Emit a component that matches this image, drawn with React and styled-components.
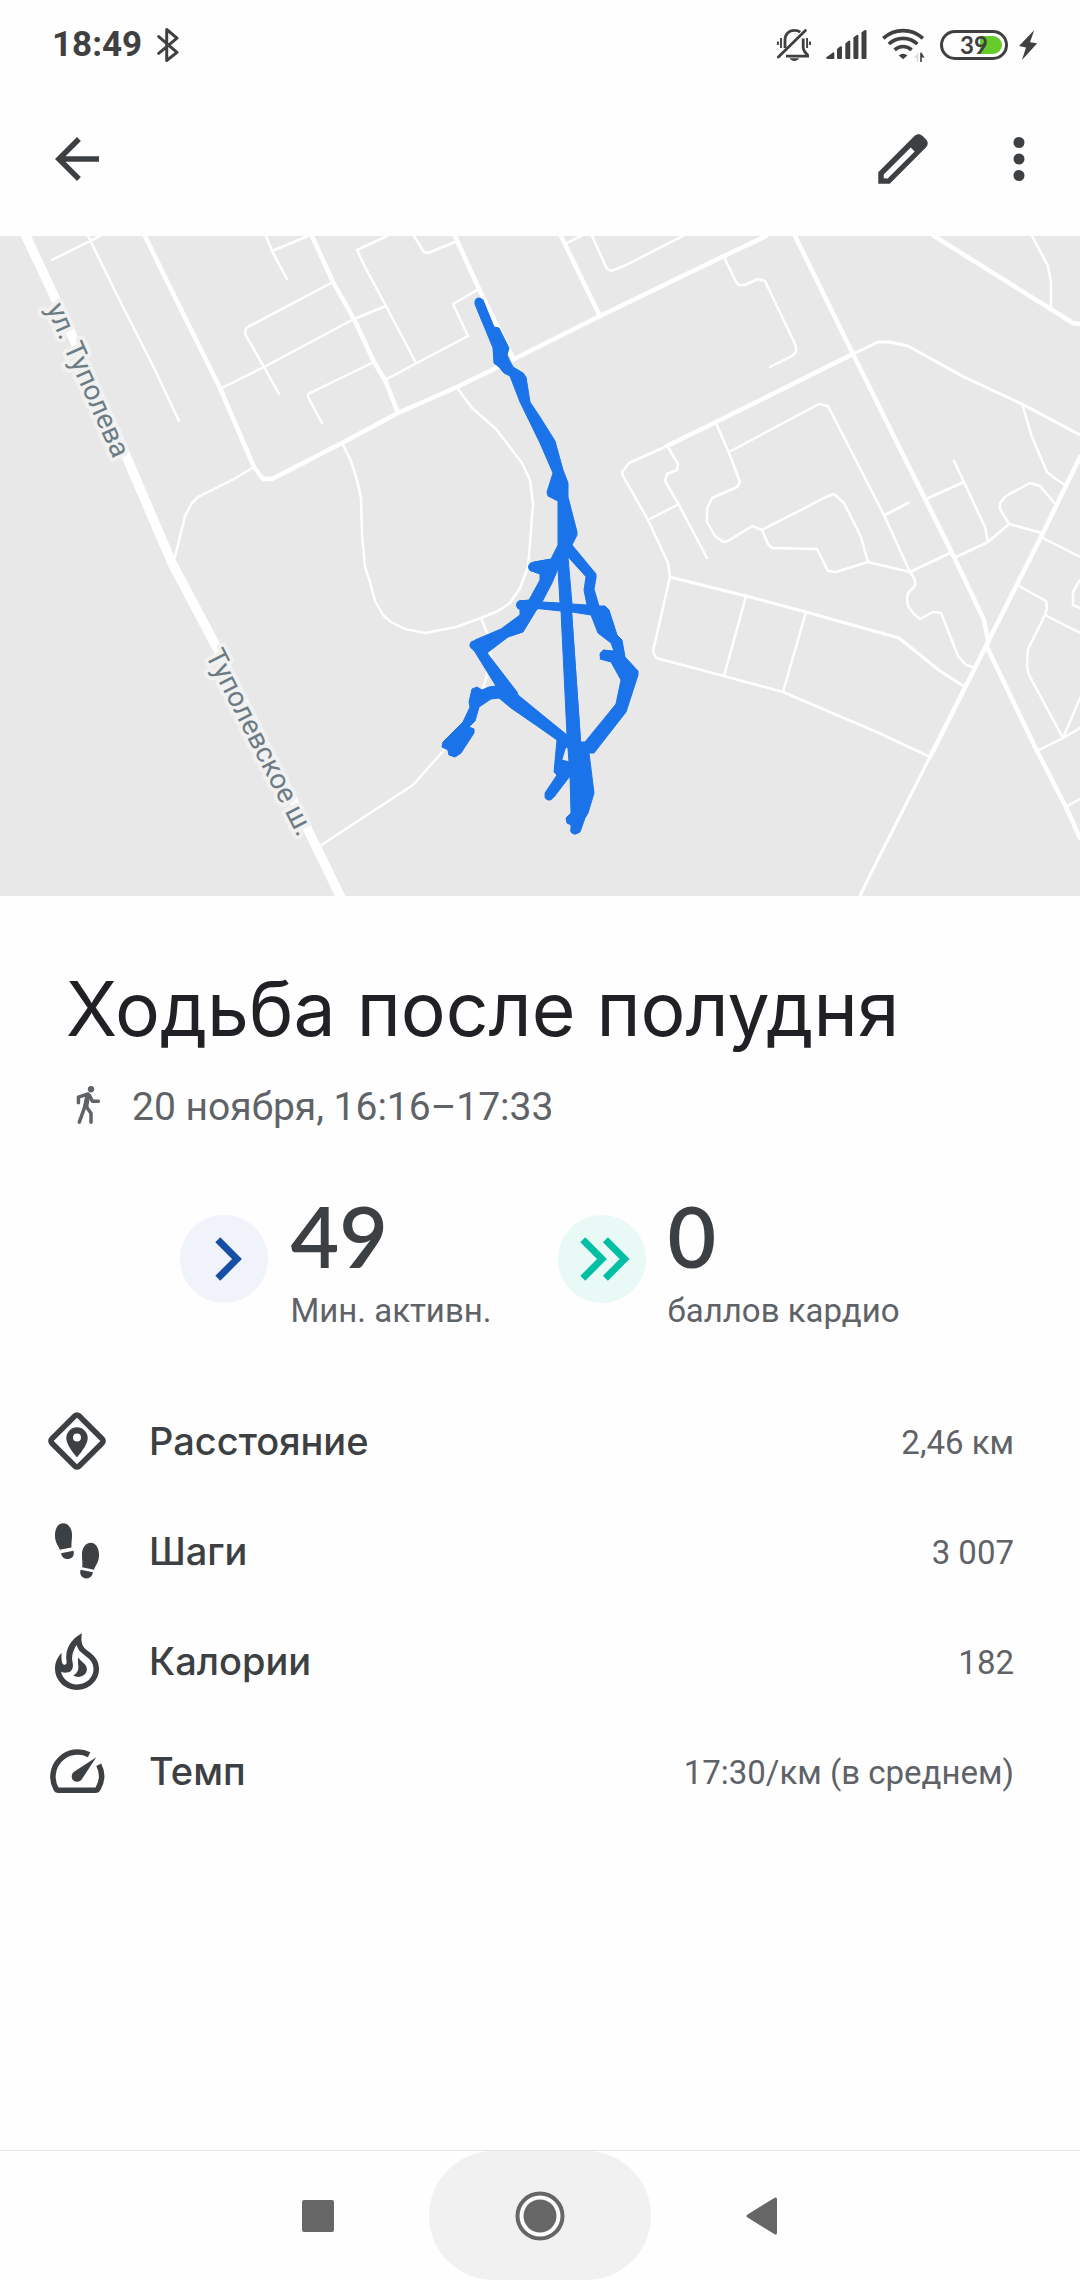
import React from "react";
import styled, { createGlobalStyle } from "styled-components";

const color = {
    page: "#fefefe",
    title: "#202124",
    text: "#3c4043",
    muted: "#5f6368",
    status: "#404040",
    nav: "#666666",
    navPressed: "#f1f1f1",
    line: "#e4e4e4",
    land: "#e8e8e8",
    road: "#ffffff",
    route: "#1a73e8",
    roadLabel: "#6d7c84",
    active: "#174ea6",
    activeSoft: "#f0f3f9",
    cardio: "#00bfa5",
    cardioSoft: "#e8f9f6",
    charge: "#66cc2c",
};

const GlobalStyle = createGlobalStyle`
    *, *::before, *::after {
        box-sizing: border-box;
    }
    body {
        margin: 0;
        background: ${color.page};
        color: ${color.text};
        font-family: Roboto, "Noto Sans", sans-serif;
    }
    svg {
        display: block;
        flex: none;
    }
`;

const Screen = styled.div`
    display: flex;
    flex-direction: column;
    min-height: 100vh;
`;

const StatusBar = styled.div`
    display: flex;
    align-items: center;
    justify-content: space-between;
    height: 82px;
    padding: 7px 43px 0 52px;
    color: ${color.status};
`;

const StatusGroup = styled.div`
    display: flex;
    align-items: center;
    gap: 15px;
`;

const Charge = styled.div`
    display: flex;
    align-items: center;
    gap: 11px;
`;

const Clock = styled.time`
    font-size: 35px;
    font-weight: 700;
    line-height: 40px;
`;

const Battery = styled.span`
    position: relative;
    display: flex;
    align-items: center;
    justify-content: center;
    width: 68px;
    height: 30px;
    border: 3px solid ${color.status};
    border-radius: 15px;
    font-family: Lato, sans-serif;
    font-size: 24px;
    font-weight: 700;
    line-height: 24px;
`;

const BatteryLevel = styled.span`
    position: absolute;
    top: 3px;
    right: 3px;
    bottom: 3px;
    width: 22px;
    border-radius: 0 9px 9px 0;
    background: ${color.charge};
`;

const BatteryValue = styled.span`
    position: relative;
`;

const AppBar = styled.header`
    display: flex;
    align-items: center;
    height: 154px;
    padding: 0 28px 0 44px;
`;

const IconButton = styled.button`
    display: block;
    padding: 0;
    border: 0;
    background: none;
    color: ${color.text};
`;

const Actions = styled.div`
    display: flex;
    gap: 50px;
    margin-left: auto;
`;

const MapView = styled.svg`
    width: 100%;
    height: auto;
    background: ${color.land};
`;

const Roads = styled.g`
    fill: none;
    stroke: ${color.road};
    stroke-width: ${props => props.$width}px;
    stroke-linecap: round;
    stroke-linejoin: round;
`;

const RoadLabel = styled.text`
    fill: ${color.roadLabel};
    stroke: #f1f1f1;
    stroke-width: 8px;
    stroke-linejoin: round;
    paint-order: stroke;
    font-size: 28px;
`;

const Summary = styled.section`
    padding: 67px 66px 0;
`;

const Title = styled.h1`
    margin: 0;
    color: ${color.title};
    font-family: Inter, sans-serif;
    font-size: 75px;
    font-weight: 400;
    line-height: 92px;
`;

const When = styled.p`
    display: flex;
    align-items: flex-start;
    gap: 24px;
    margin: 29px 0 0;
    color: ${color.muted};
    font-size: 39px;
    line-height: 46px;
`;

const Scores = styled.section`
    display: flex;
    justify-content: center;
    gap: 66px;
    padding-top: 58px;
`;

const Score = styled.div`
    display: flex;
    gap: 22px;
`;

const Badge = styled.span`
    width: 88px;
    height: 88px;
    margin-top: 27px;
    border-radius: 50%;
    background: ${props => props.$background};
    color: ${props => props.$color};
`;

const ScoreValue = styled.div`
    font-family: Lato, sans-serif;
    font-size: 84px;
    font-weight: 600;
    line-height: 96px;
`;

const ScoreLabel = styled.div`
    margin-top: 7px;
    color: ${color.muted};
    font-size: 33px;
    line-height: 40px;
`;

const Details = styled.dl`
    margin: 55px 0 0;
`;

const DetailRow = styled.div`
    display: flex;
    align-items: center;
    height: 110px;
    padding: 0 66px 0 44px;
`;

const DetailLabel = styled.dt`
    margin-left: 39px;
    font-family: Inter, sans-serif;
    font-size: 38px;
    font-weight: 500;
    line-height: 48px;
`;

const DetailValue = styled.dd`
    margin: 0 0 0 auto;
    padding-top: 3px;
    color: ${color.muted};
    font-size: 33px;
    line-height: 40px;
`;

const NavBar = styled.nav`
    display: flex;
    justify-content: center;
    margin-top: auto;
    border-top: 1px solid ${color.line};
`;

const NavButton = styled.button`
    display: flex;
    align-items: center;
    justify-content: center;
    width: 222px;
    height: 129px;
    padding: 0;
    border: 0;
    border-radius: 65px;
    background: ${props => (props.$pressed ? color.navPressed : "none")};
    color: ${color.nav};
`;

const Icon = ({ size = 66, children }) => (
    <svg width={size} height={size} viewBox="0 0 24 24" fill="currentColor" aria-hidden="true">
        {children}
    </svg>
);

const BluetoothIcon = () => (
    <svg width="22" height="34" viewBox="0 0 22 34" fill="none" stroke="currentColor" strokeWidth="3" strokeLinecap="round" strokeLinejoin="round" aria-hidden="true">
        <path d="M1.7 8.7 20 24.3 9.7 32.5V1.5L20 10.2 1.7 25.3" />
    </svg>
);

const SilentIcon = () => (
    <svg width="34" height="32" viewBox="0 0 34 32" fill="none" stroke="currentColor" strokeWidth="2.8" aria-hidden="true">
        <path d="M8 19V11C8 5 12 1.4 17.3 1.4c2.4 0 4.4.6 5.9 1.8M26.2 9.5v8.8c0 2.8 1.4 4.9 4.4 7.7v1.2H9" />
        <path d="M1.4 28 28.4 1.5" strokeLinecap="round" />
        <path d="M.9 12.4v3.6M4 9v10M30.1 9v10M33 12.4v3.6" strokeWidth="1.9" />
        <path d="M12.6 29.2h9.6c-1.2 1.8-2.8 2.7-4.8 2.7s-3.6-.9-4.8-2.7z" fill="currentColor" stroke="none" />
    </svg>
);

const SignalIcon = () => (
    <svg width="41" height="29" viewBox="0 0 41 29" fill="currentColor" aria-hidden="true">
        <path d="M.3 27.2 7 22.4q1.3-.4 1.3 1V29H1.5Q0 28.8.3 27.2zM11 19l3-2.4q2-1 2 .6V28q0 1-1 1h-3q-1 0-1-1zM19.3 13.6l3-2.6q2-1.2 2 .8V28q0 1-1 1h-3q-1 0-1-1zM27.4 7.6l3-2.4q2-1.2 2 .6V28q0 1-1 1h-3q-1 0-1-1zM35.5 2.2 38.5.3q2-.8 2 .8V28q0 1-1 1h-3q-1 0-1-1z" />
    </svg>
);

const WifiIcon = () => (
    <svg width="43" height="34" viewBox="0 0 43 34" fill="none" stroke="currentColor" strokeWidth="3.6" aria-hidden="true">
        <path d="M1.3 10.4a29 29 0 0 1 39.6 0M6.8 16a21 21 0 0 1 28.6 0M12.6 21.9a12.4 12.4 0 0 1 17 0" />
        <path d="M21.1 31.2l4.3-3.6q-1.8-1.8-4.3-1.8t-4.3 1.8z" fill="currentColor" stroke="none" />
        <path d="M36.3 24.6v9.4h-1.4v-4.2h-3z" fill="#d8d8d8" stroke="none" />
        <path d="M38.2 34v-9.4h1.2l3.2 5h-2.8V34z" fill="currentColor" stroke="none" />
    </svg>
);

const BoltIcon = () => (
    <svg width="18" height="30" viewBox="0 0 18 30" fill="currentColor" aria-hidden="true">
        <path d="M15.3 0 11 12.2l7.3 1L3 30l4-12.6-7-1.4z" />
    </svg>
);

const WalkIcon = () => (
    <Icon size={42}>
        <circle cx="14.3" cy="3" r="1.8" />
        <path d="M11.300 5.200 14 5.800 12.700 13.400 9.700 13z" />
        <path
            d="M12.600 5.700 7.100 7.500V10.700M13.400 6.500 15.100 9.900H18.500M12.400 6.500 10.900 12.600 7.600 21.800M11.300 12.600 14.300 16.700V21.800"
            fill="none"
            stroke="currentColor"
            strokeWidth="2"
            strokeLinecap="round"
            strokeLinejoin="round"
        />
    </Icon>
);

const ActiveGlyph = () => (
    <svg width="88" height="88" viewBox="0 0 88 88" fill="none" stroke="currentColor" strokeWidth="7" aria-hidden="true">
        <path d="M37.8 24.7 57 44 37.8 63.3" />
    </svg>
);

const CardioGlyph = () => (
    <svg width="88" height="88" viewBox="0 0 88 88" fill="none" stroke="currentColor" strokeWidth="7" aria-hidden="true">
        <path d="M24.8 24.7 44 44 24.8 63.3M47.4 24.7 66.6 44 47.4 63.3" />
    </svg>
);

const DistanceIcon = () => (
    <Icon>
        <rect x="5" y="5" width="14" height="14" rx="1" transform="rotate(45 12 12)" fill="none" stroke="currentColor" strokeWidth="2" />
        <path fillRule="evenodd" d="M12 7a3.9 3.9 0 0 0-3.9 3.9c0 2.8 3.9 7 3.9 7s3.9-4.2 3.9-7A3.9 3.9 0 0 0 12 7zm0 2.3a1.45 1.45 0 1 1 0 2.9 1.45 1.45 0 0 1 0-2.9z" />
    </Icon>
);

const StepsIcon = () => (
    <Icon>
        <path d="M7 1.9C5 1.9 4 4 4 6.3c0 2.2.7 3.2 1.3 4.2.3.5.3.7.4 1l4.3-.8c-.1-1.6.2-2.7.2-4.6C10.2 3.9 8.9 1.9 7 1.9zM6.2 12.8l4.5-.9c.5 1.7-.4 2.8-1.7 3-1.3.2-2.5-.5-2.8-2.1z" />
        <path d="M17 9c2 0 3 2.1 3 4.3 0 2.2-.7 3.3-1.3 4.300-.3.500-.4.800-.5 1.200l-4.300-.9c.2-1.600-.1-2.700-.1-4.700C13.800 11 15.100 9 17 9zM17.800 19.700l-4.500-.9c-.5 1.700.4 2.900 1.700 3.100 1.300.3 2.500-.5 2.800-2.200z" />
    </Icon>
);

const CaloriesIcon = () => (
    <Icon>
        <path
            fillRule="evenodd"
            d="M13.8 1.9C9.6 4 7.5 8 8.2 12.2c.2 1.3-1 1.6-1.5.6-.4-.9-.4-2.3-.3-3.7C4.9 10.6 4 12.6 4 14.7c0 4.4 3.6 7.8 8 7.8s8-3.4 8-7.6c0-3.3-2-5-4-6.5s-2.8-3-2.2-6.5zM11.9 6.2c-1.4 2-2 4.2-1.5 6.3.5 1.9-.4 3.6-2.1 3.7-.8.1-1.4 0-2.1-.3.6 2.700 3 4.600 5.800 4.600 3.400 0 6-2.500 6-5.600 0-2.300-1.300-3.500-3.100-4.900-1.500-1.100-2.600-2-3-3.800z"
        />
        <path d="M12.5 10.7c-.5 1.7.3 3.1-.1 4.500-.3 1.100-1 1.600-1.800 2.100 2.400 1.300 5-.2 5-2.400 0-1.900-2.200-2.500-3.100-4.200z" />
    </Icon>
);

const PaceIcon = () => (
    <Icon>
        <path d="M16.4 6.1A9 9 0 0 0 4.3 18.3Q4.6 19 5.3 19H18.7Q19.4 19 19.7 18.3A9 9 0 0 0 19.9 9.7" fill="none" stroke="currentColor" strokeWidth="2" />
        <path d="M19 7 13.7 15.1a2 2 0 1 1-2.9-2.7z" />
    </Icon>
);

const RouteMap = () => (
    <MapView viewBox="0 0 1080 660" role="img" aria-label="Маршрут">
        <Roads $width={2.5}>
            <path d="M52 24 100 0M88 0 119 63 155 134 179 185M254 231 234 243 198 261 192 267 185 280 175 321" />
            <path d="M266 0 272 15 287 43M272 15 308 0M333 46 246 92 245 98 264 131 279 158" />
            <path d="M222 152 264 131 354 83 386 70M374 126 308 158V161L322 187" />
            <path d="M385 144 417 127 468 100 453 68 479 53M387 0 357 14 365 31 386 70 416 127M414 0 424 16 428 17 455 6" />
            <path d="M342 207 351 225 357 244 361 262 362 299 365 331 370 346 375 365 383 379 391 386 405 393 425 397 456 391 481 382 498 375 510 367 520 352 528 331 530 307 533 268 530 244 522 227 496 193 472 172 458 153" />
            <path d="M481 382 488 399 491 421 487 439 483 453M444 514 413 549 341 596 320 610" />
            <path d="M1032 0 1048 30 1051 46V72M567 7 581 0M592 0 607 33 611 35 624 30 683 0" />
            <path d="M724 21 736 46 739 49H745L758 43 765 45 796 110V116L792 120 770 131" />
            <path d="M667 210 629 227 622 236 623 240 648 284 668 327 670 341M668 211 678 228 677 234 667 238 665 245 679 269 707 322M648 284 679 268" />
            <path d="M716 187 729 217 740 246 737 251 712 262 707 273V286L715 300 723 306 728 305 752 290 762 294 826 261 834 258 844 267 861 301 868 326" />
            <path d="M729 216 819 168 828 170 884 279 910 336M762 294 768 308 772 312 817 313 828 335 836 336 868 326 910 336 950 317" />
            <path d="M910 336 915 344V350L908 357 907 363 908 370 914 378 920 383 933 376 941 377 958 420 966 429 975 432" />
            <path d="M926 263 964 246M954 225 964 246 985 291 988 306M954 322 988 306 1009 288 1042 297M1009 288 1000 273V267L1006 260 1030 247 1040 250 1056 269" />
            <path d="M1022 168 1032 201 1047 236 1053 241 1065 249M1043 302 1080 321" />
            <path d="M670 341 653 415 656 422 724 440 783 456 879 497 930 521M746 360 724 440M806 376 783 456" />
            <path d="M1019 350 1046 365 1047 372 1045 379 1028 413 1027 430 1029 439 1063 502M1045 379 1080 397M1080 344 1073 356V369L1080 372" />
            <path d="M1037 515 1063 502 1080 492M1063 502 1080 462M1066 571 1080 563" />
        </Roads>
        <Roads $width={3}>
            <path d="M853 118 878 106H890L908 110 964 141 1022 168 1080 199M885 279 908 267M930 521 871 637 860 660" />
            <path d="M670 341 746 360 806 376 899 402 940 435 965 451" />
        </Roads>
        <Roads $width={4.5}>
            <path d="M145 0 160 31 220 152 254 231 263 243H272L342 207 398 177 457 151 498 131 540 110 600 80 724 20 766 0" />
            <path d="M312 0 333 46 354 83 374 126 385 144 398 177M455 0 479 53 513 122M561 0 576 31 600 80" />
            <path d="M795 0 853 118 925 263 954 321 984 384 988 404 987 411 1037 515 1066 571 1080 602M853 118 716 186 667 210" />
            <path d="M934 0 1073 87 1080 88M1080 221 1042 299 988 406 930 521" />
        </Roads>
        <Roads $width={9.5}>
            <path d="M24 -4 57 66 74 104 127 222 172 327 217 412 313 604 342 664" />
        </Roads>
        <RoadLabel transform="translate(46 72) rotate(66)">ул. Туполева</RoadLabel>
        <RoadLabel transform="translate(205 419) rotate(63)">Туполевское ш.</RoadLabel>
        <g fill={color.route} stroke={color.route} strokeLinecap="round" strokeLinejoin="round">
            <path
                fillRule="evenodd"
                strokeWidth="1"
                d="M475 68 493 112 494 127 499 131 504 137 510 140 520 166 540 207 553 237 547 256 548 260 558 265V309L551 323 534 326V336L540 338V344L529 364 520 365V373L520 379 501 393 475 404 470 410 475 416 496 450 489 451 482 454 477 451 472 453 469 466 470 471 463 486 443 506 442 511 448 514 449 519 455 521 461 517 474 497 474 493 469 491 475 485 479 471 491 463 499 462 511 472 540 492 557 504 554 536 557 539 545 557 546 562 554 561 570 540 571 577 566 582 567 587 571 589V596L575 598 580 596 585 582 588 577 594 557 589 517H594L626 476 638 439V435L625 421 622 404 617 399 609 374 605 370H599L594 353 596 342V338L572 309 577 299V296L568 261V247L563 234 555 205 540 181 530 166 526 141 523 137 513 131 507 119 509 112 499 92 494 91 483 64zM558 333 560 367 542 366 552 347zM542 373 561 375 567 499 540 477 518 459 517 456 487 417 508 401 523 396 537 373zM568 321 572 368 587 369 584 354 586 341zM572 376 591 379 598 397 611 407 614 415 603 414 600 423 611 426 621 444 616 468 585 506H581zM566 511 568 512 569 526 562 524z"
            />
            <path fill="none" strokeWidth="9" d="M479 66 486 84M604 419 614 421M549 560 555 552M575 594 577 588M474 409 482 410" />
            <path fill="none" strokeWidth="10" d="M533 331 550 328M521 369 534 370" />
        </g>
    </MapView>
);

const details = [
    { label: "Расстояние", value: "2,46 км", Glyph: DistanceIcon },
    { label: "Шаги", value: "3 007", Glyph: StepsIcon },
    { label: "Калории", value: "182", Glyph: CaloriesIcon },
    { label: "Темп", value: "17:30/км (в среднем)", Glyph: PaceIcon },
];

export default () => (
    <Screen>
        <GlobalStyle />
        <StatusBar>
            <StatusGroup>
                <Clock>18:49</Clock>
                <BluetoothIcon />
            </StatusGroup>
            <StatusGroup>
                <SilentIcon />
                <SignalIcon />
                <WifiIcon />
                <Charge>
                    <Battery>
                        <BatteryLevel />
                        <BatteryValue>39</BatteryValue>
                    </Battery>
                    <BoltIcon />
                </Charge>
            </StatusGroup>
        </StatusBar>
        <AppBar>
            <IconButton aria-label="Назад">
                <Icon>
                    <path d="M20 11H7.83l5.59-5.59L12 4l-8 8 8 8 1.41-1.41L7.83 13H20z" />
                </Icon>
            </IconButton>
            <Actions>
                <IconButton aria-label="Изменить">
                    <Icon>
                        <path d="M20.41 4.94l-1.35-1.35c-.78-.78-2.05-.78-2.83 0L3 16.82V21h4.18L20.41 7.77c.79-.78.79-2.05 0-2.83zm-14 14.12L5 19v-1.36l9.82-9.82 1.41 1.41-9.82 9.83z" />
                    </Icon>
                </IconButton>
                <IconButton aria-label="Ещё">
                    <Icon>
                        <circle cx="12" cy="6" r="2" />
                        <circle cx="12" cy="12" r="2" />
                        <circle cx="12" cy="18" r="2" />
                    </Icon>
                </IconButton>
            </Actions>
        </AppBar>
        <RouteMap />
        <Summary>
            <Title>Ходьба после полудня</Title>
            <When>
                <WalkIcon />
                20 ноября, 16:16–17:33
            </When>
        </Summary>
        <Scores>
            <Score>
                <Badge $background={color.activeSoft} $color={color.active}>
                    <ActiveGlyph />
                </Badge>
                <div>
                    <ScoreValue>49</ScoreValue>
                    <ScoreLabel>Мин. активн.</ScoreLabel>
                </div>
            </Score>
            <Score>
                <Badge $background={color.cardioSoft} $color={color.cardio}>
                    <CardioGlyph />
                </Badge>
                <div>
                    <ScoreValue>0</ScoreValue>
                    <ScoreLabel>баллов кардио</ScoreLabel>
                </div>
            </Score>
        </Scores>
        <Details>
            {details.map(({ label, value, Glyph }) => (
                <DetailRow key={label}>
                    <Glyph />
                    <DetailLabel>{label}</DetailLabel>
                    <DetailValue>{value}</DetailValue>
                </DetailRow>
            ))}
        </Details>
        <NavBar>
            <NavButton aria-label="Последние приложения">
                <svg width="32" height="32" viewBox="0 0 32 32" fill="currentColor">
                    <rect width="32" height="32" rx="2" />
                </svg>
            </NavButton>
            <NavButton $pressed aria-label="Главный экран">
                <svg width="50" height="50" viewBox="0 0 50 50">
                    <circle cx="25" cy="25" r="22.5" fill={color.page} stroke="currentColor" strokeWidth="4" />
                    <circle cx="25" cy="25" r="16.5" fill="currentColor" />
                </svg>
            </NavButton>
            <NavButton aria-label="Назад">
                <svg width="32" height="38" viewBox="0 0 32 38" fill="currentColor" stroke="currentColor" strokeWidth="3" strokeLinejoin="round">
                    <path d="M2 19 29.5 2V36z" />
                </svg>
            </NavButton>
        </NavBar>
    </Screen>
);
